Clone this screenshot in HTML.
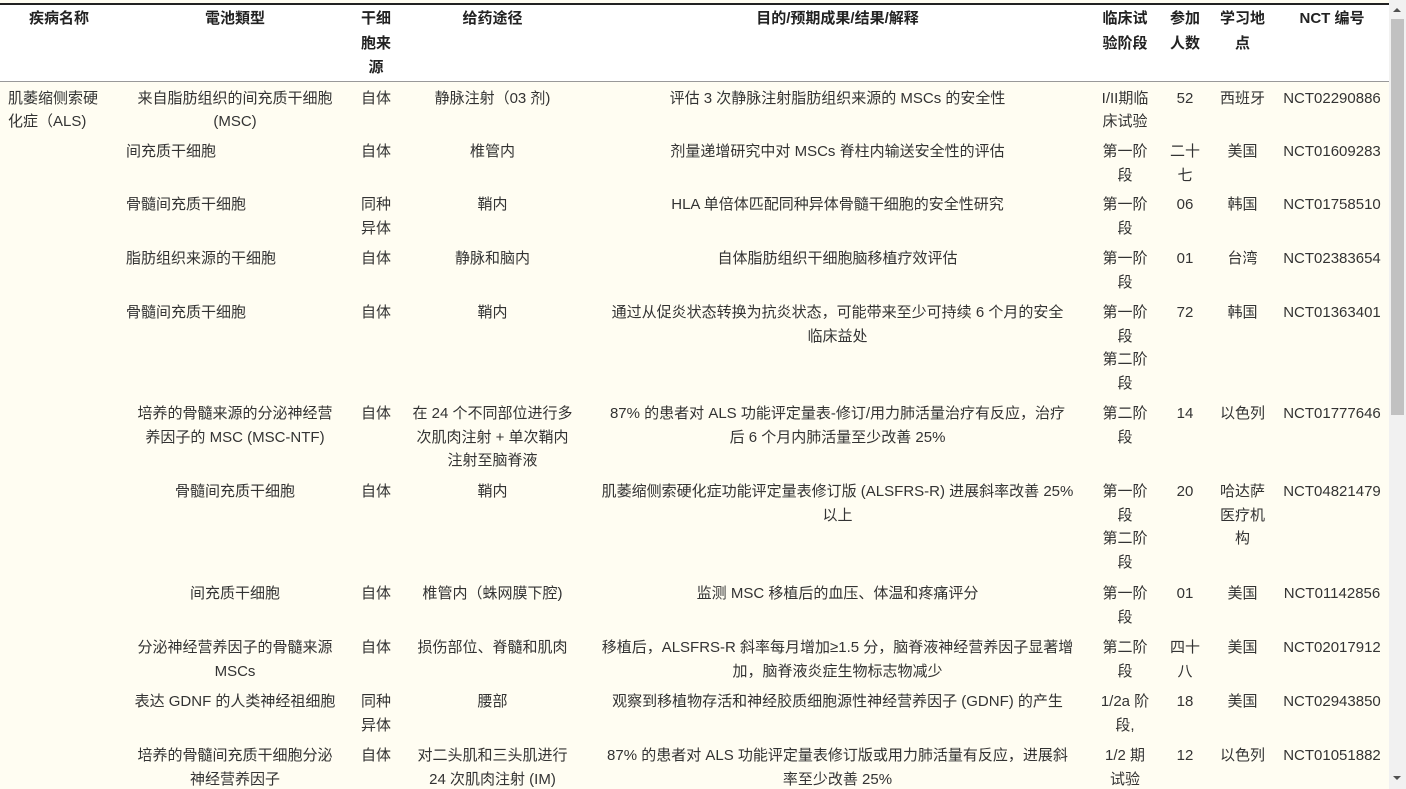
<!DOCTYPE html>
<html><head><meta charset="utf-8"><style>
html,body{margin:0;padding:0;width:1406px;height:789px;overflow:hidden;background:#fffdf2;}
body{font-family:"Liberation Sans","Noto Sans CJK SC",sans-serif;font-size:15px;color:#333;}
.wrap{position:absolute;left:0;top:0;width:1389px;height:789px;overflow:hidden;background:#fffdf2;}
table{border-collapse:collapse;table-layout:fixed;width:1389px;position:absolute;top:3px;left:0;}
thead tr{background:#fff;height:76px;}
th{font-weight:bold;color:#222;vertical-align:top;text-align:center;line-height:24.5px;padding:2px 4px 0;border-top:2px solid #222;border-bottom:1px solid #999;white-space:nowrap;}
td{vertical-align:top;line-height:23.5px;padding:5px 4px 0;text-align:center;white-space:nowrap;}
td.l{text-align:left;padding-left:8px;}
.sb{position:absolute;left:1389px;top:0;width:17px;height:789px;background:#f1f1f1;}
.th{position:absolute;left:1391px;top:19px;width:13px;height:396px;background:#c1c1c1;}
.up,.dn{position:absolute;left:1393px;width:0;height:0;border-left:4px solid transparent;border-right:4px solid transparent;}
.up{top:8px;border-bottom:4px solid #505050;}
.dn{top:776px;border-top:4px solid #505050;}
</style></head><body>
<div class="wrap">
<table>
<colgroup><col style="width:118px"><col style="width:234px"><col style="width:48px"><col style="width:185px"><col style="width:505px"><col style="width:70px"><col style="width:50px"><col style="width:65px"><col style="width:114px"></colgroup>
<thead><tr><th>疾病名称</th><th>電池類型</th><th>干细<br>胞来<br>源</th><th>给药途径</th><th>目的/预期成果/结果/解释</th><th>临床试<br>验阶段</th><th>参加<br>人数</th><th>学习地<br>点</th><th>NCT 编号</th></tr></thead>
<tbody>
<tr style="height:54px"><td class="l">肌萎缩侧索硬<br>化症（ALS)</td><td>来自脂肪组织的间充质干细胞<br>(MSC)</td><td>自体</td><td>静脉注射（03 剂)</td><td>评估 3 次静脉注射脂肪组织来源的 MSCs 的安全性</td><td>I/II期临<br>床试验</td><td>52</td><td>西班牙</td><td>NCT02290886</td></tr>
<tr style="height:53px"><td></td><td class="l">间充质干细胞</td><td>自体</td><td>椎管内</td><td>剂量递增研究中对 MSCs 脊柱内输送安全性的评估</td><td>第一阶<br>段</td><td>二十<br>七</td><td>美国</td><td>NCT01609283</td></tr>
<tr style="height:54px"><td></td><td class="l">骨髓间充质干细胞</td><td>同种<br>异体</td><td>鞘内</td><td>HLA 单倍体匹配同种异体骨髓干细胞的安全性研究</td><td>第一阶<br>段</td><td>06</td><td>韩国</td><td>NCT01758510</td></tr>
<tr style="height:54px"><td></td><td class="l">脂肪组织来源的干细胞</td><td>自体</td><td>静脉和脑内</td><td>自体脂肪组织干细胞脑移植疗效评估</td><td>第一阶<br>段</td><td>01</td><td>台湾</td><td>NCT02383654</td></tr>
<tr style="height:101px"><td></td><td class="l">骨髓间充质干细胞</td><td>自体</td><td>鞘内</td><td>通过从促炎状态转换为抗炎状态，可能带来至少可持续 6 个月的安全<br>临床益处</td><td>第一阶<br>段<br>第二阶<br>段</td><td>72</td><td>韩国</td><td>NCT01363401</td></tr>
<tr style="height:78px"><td></td><td>培养的骨髓来源的分泌神经营<br>养因子的 MSC (MSC-NTF)</td><td>自体</td><td>在 24 个不同部位进行多<br>次肌肉注射 + 单次鞘内<br>注射至脑脊液</td><td>87% 的患者对 ALS 功能评定量表-修订/用力肺活量治疗有反应，治疗<br>后 6 个月内肺活量至少改善 25%</td><td>第二阶<br>段</td><td>14</td><td>以色列</td><td>NCT01777646</td></tr>
<tr style="height:102px"><td></td><td>骨髓间充质干细胞</td><td>自体</td><td>鞘内</td><td>肌萎缩侧索硬化症功能评定量表修订版 (ALSFRS-R) 进展斜率改善 25%<br>以上</td><td>第一阶<br>段<br>第二阶<br>段</td><td>20</td><td>哈达萨<br>医疗机<br>构</td><td>NCT04821479</td></tr>
<tr style="height:54px"><td></td><td>间充质干细胞</td><td>自体</td><td>椎管内（蛛网膜下腔)</td><td>监测 MSC 移植后的血压、体温和疼痛评分</td><td>第一阶<br>段</td><td>01</td><td>美国</td><td>NCT01142856</td></tr>
<tr style="height:54px"><td></td><td>分泌神经营养因子的骨髓来源<br>MSCs</td><td>自体</td><td>损伤部位、脊髓和肌肉</td><td>移植后，ALSFRS-R 斜率每月增加≥1.5 分，脑脊液神经营养因子显著增<br>加，脑脊液炎症生物标志物减少</td><td>第二阶<br>段</td><td>四十<br>八</td><td>美国</td><td>NCT02017912</td></tr>
<tr style="height:54px"><td></td><td>表达 GDNF 的人类神经祖细胞</td><td>同种<br>异体</td><td>腰部</td><td>观察到移植物存活和神经胶质细胞源性神经营养因子 (GDNF) 的产生</td><td>1/2a 阶<br>段,</td><td>18</td><td>美国</td><td>NCT02943850</td></tr>
<tr style="height:54px"><td></td><td>培养的骨髓间充质干细胞分泌<br>神经营养因子</td><td>自体</td><td>对二头肌和三头肌进行<br>24 次肌肉注射 (IM)</td><td>87% 的患者对 ALS 功能评定量表修订版或用力肺活量有反应，进展斜<br>率至少改善 25%</td><td>1/2 期<br>试验</td><td>12</td><td>以色列</td><td>NCT01051882</td></tr>
</tbody></table>
</div>
<div class="sb"></div><div class="th"></div><div class="up"></div><div class="dn"></div>
</body></html>
